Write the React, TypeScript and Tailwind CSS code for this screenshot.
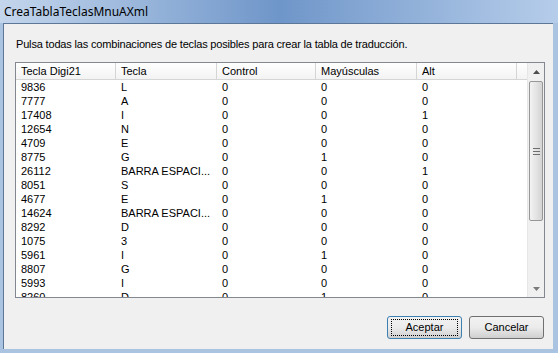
import React from 'react';

type Row = [string, string, string, string, string];

const rows: Row[] = [
  ['9836', 'L', '0', '0', '0'],
  ['7777', 'A', '0', '0', '0'],
  ['17408', 'I', '0', '0', '1'],
  ['12654', 'N', '0', '0', '0'],
  ['4709', 'E', '0', '0', '0'],
  ['8775', 'G', '0', '1', '0'],
  ['26112', 'BARRA ESPACI...', '0', '0', '1'],
  ['8051', 'S', '0', '0', '0'],
  ['4677', 'E', '0', '1', '0'],
  ['14624', 'BARRA ESPACI...', '0', '0', '0'],
  ['8292', 'D', '0', '0', '0'],
  ['1075', '3', '0', '0', '0'],
  ['5961', 'I', '0', '1', '0'],
  ['8807', 'G', '0', '0', '0'],
  ['5993', 'I', '0', '0', '0'],
  ['8260', 'D', '0', '1', '0'],
];

const columns = ['Tecla Digi21', 'Tecla', 'Control', 'Mayúsculas', 'Alt'];
const widths = ['w-[100px]', 'w-[101px]', 'w-[99px]', 'w-[101px]', 'w-[100px]'];

const ScrollBar: React.FC = () => (
  <div className="flex w-[17px] shrink-0 flex-col bg-[#f0f0f0] border-l border-[#e6e6e6]">
    <div className="flex h-[17px] items-center justify-center">
      <svg width="7" height="4" viewBox="0 0 7 4">
        <path d="M0 4 L3.5 0 L7 4 Z" fill="#4d4d4d" />
      </svg>
    </div>
    <div className="mx-[1px] mt-[1px] flex h-[140px] items-center justify-center rounded-[2px] border border-[#979797] bg-gradient-to-r from-[#f3f3f3] via-[#e4e4e4] to-[#d4d4d4]">
      <svg width="7" height="7" viewBox="0 0 7 7">
        <path d="M0 0.5 H7 M0 3.5 H7 M0 6.5 H7" stroke="#6e6e6e" strokeWidth="1" />
      </svg>
    </div>
    <div className="flex-1" />
    <div className="flex h-[17px] items-center justify-center">
      <svg width="7" height="4" viewBox="0 0 7 4">
        <path d="M0 0 L3.5 4 L7 0 Z" fill="#7a7a7a" />
      </svg>
    </div>
  </div>
);

const Button: React.FC<{ label: string; primary?: boolean }> = ({ label, primary }) => (
  <button
    className={`flex h-[23px] w-[75px] items-center justify-center rounded-[3px] border bg-gradient-to-b from-[#f2f2f2] via-[#ebebeb] to-[#cfcfcf] text-[11px] text-black ${
      primary ? 'border-[#3c7fb1]' : 'border-[#707070]'
    }`}
  >
    {primary ? (
      <span className="flex h-[17px] w-[67px] items-center justify-center border border-dotted border-black">
        {label}
      </span>
    ) : (
      label
    )}
  </button>
);

export default function App() {
  return (
    <div
      className="flex h-[353px] w-[558px] flex-col overflow-hidden bg-[#a9c3e1]"
      style={{ fontFamily: '"Liberation Sans", Arial, sans-serif' }}
    >
      {/* Title bar */}
      <div className="flex h-[23px] shrink-0 items-center bg-gradient-to-r from-[#c4d6ec] via-[#6f96c9] to-[#b6cdea] pl-[4px]">
        <span className="text-[12px] text-black" style={{ fontFamily: '"Noto Sans", "Open Sans", sans-serif' }}>
          CreaTablaTeclasMnuAXml
        </span>
      </div>

      <div className="flex flex-1 pl-[3px] pr-[5px] pb-[4px]">
        {/* Client area */}
        <div className="flex flex-1 flex-col border-t border-l border-[#5c7797] bg-[#f0f0f0] pl-[11px] pr-[8px]">
          <div className="pl-[1px] pt-[13px] text-[11px] leading-[14px] tracking-[-0.17px] text-black">
            Pulsa todas las combinaciones de teclas posibles para crear la tabla de traducción.
          </div>

          {/* List view */}
          <div className="mt-[11px] flex h-[236px] w-[530px] border border-[#828790] bg-white">
            <div className="flex flex-1 flex-col overflow-hidden">
              <div className="flex h-[17px] shrink-0 border-b border-[#d5d5d5] bg-gradient-to-b from-white to-[#f3f3f3]">
                {columns.map((c, i) => (
                  <div
                    key={c}
                    className={`${widths[i]} flex shrink-0 items-center border-r border-[#d5d5d5] pl-[5px] text-[11px] text-black`}
                  >
                    {c}
                  </div>
                ))}
                <div className="flex-1" />
              </div>
              <div className="flex flex-col">
                {rows.map((r, ri) => (
                  <div key={ri} className="flex h-[14px] shrink-0 items-center text-[11px] text-black">
                    {r.map((v, i) => (
                      <div key={i} className={`${widths[i]} shrink-0 whitespace-nowrap pl-[5px] leading-[14px]`}>
                        {v}
                      </div>
                    ))}
                  </div>
                ))}
              </div>
            </div>
            <ScrollBar />
          </div>

          <div className="mt-[18px] flex justify-end gap-[7px] pr-[1px]">
            <Button label="Aceptar" primary />
            <Button label="Cancelar" />
          </div>
        </div>
      </div>
    </div>
  );
}
